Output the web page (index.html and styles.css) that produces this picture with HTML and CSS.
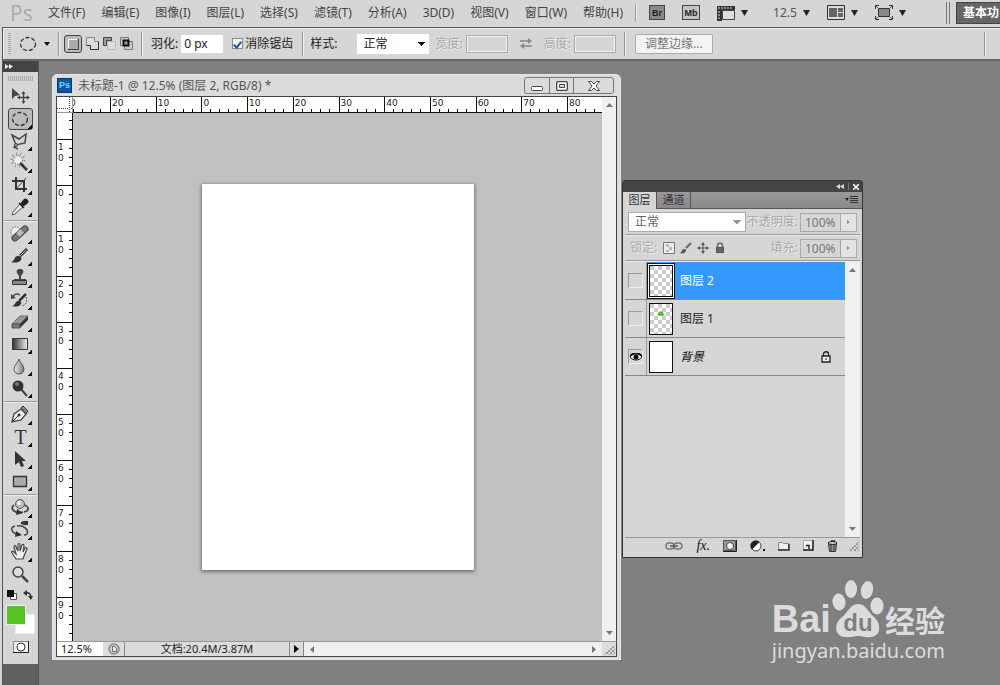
FILE: index.html
```html
<!DOCTYPE html>
<html lang="zh-CN">
<head>
    <meta charset="UTF-8">
    <meta name="viewport" content="width=device-width, initial-scale=1.0">
    <title>未标题-1</title>
    <link rel="stylesheet" href="styles.css">
</head>
<body>

    <!-- Menu bar -->
    <header class="menubar">
        <div class="logo">Ps</div>
        <nav class="menus">
            <button>文件(F)</button>
            <button>编辑(E)</button>
            <button>图像(I)</button>
            <button>图层(L)</button>
            <button>选择(S)</button>
            <button>滤镜(T)</button>
            <button>分析(A)</button>
            <button>3D(D)</button>
            <button>视图(V)</button>
            <button>窗口(W)</button>
            <button>帮助(H)</button>
        </nav>
        <span class="divider"></span>
        <div class="apps">
            <button class="app-btn bridge">Br</button>
            <button class="app-btn mini">Mb</button>
            <button class="icon-btn" aria-label="查看额外内容">
                <svg width="18" height="16" viewBox="0 0 18 16"><path d="M0 1h18v4H5v11H0z" fill="#333"/><path d="M2 2v2M5 2v2M8 2v2M11 2v2M14 2v2M1 7h2M1 10h2M1 13h2" stroke="#ddd"/><path d="M5.500 5.500h12v9h-12z" fill="#ddd" stroke="#444"/></svg>
                <svg width="7" height="6" viewBox="0 0 7 6"><path d="M0 0h7L3.500 6z" fill="#222"/></svg>
            </button>
            <button class="icon-btn zoom-level">12.5
                <svg width="7" height="6" viewBox="0 0 7 6"><path d="M0 0h7L3.500 6z" fill="#222"/></svg>
            </button>
            <button class="icon-btn" aria-label="排列文档">
                <svg width="18" height="15" viewBox="0 0 18 15"><path d="M.5.5h17v14H.5z" fill="#ddd" stroke="#333"/><path d="M2 3h8v9H2zM11 3h5v4h-5zM11 8h5v4h-5z" fill="#666"/></svg>
                <svg width="7" height="6" viewBox="0 0 7 6"><path d="M0 0h7L3.500 6z" fill="#222"/></svg>
            </button>
            <button class="icon-btn" aria-label="屏幕模式">
                <svg width="18" height="15" viewBox="0 0 18 15"><path d="M3.500 3.500h11v8h-11z" fill="#888" stroke="#333"/><path d="M.5 4V.5H4M14 .5h3.500V4M17.500 11v3.500H14M4 14.500H.5V11" fill="none" stroke="#333"/><path d="M1 1l3 3M17 1l-3 3M1 14l3-3M17 14l-3-3" stroke="#555"/></svg>
                <svg width="7" height="6" viewBox="0 0 7 6"><path d="M0 0h7L3.500 6z" fill="#222"/></svg>
            </button>
        </div>
        <div class="switcher">
            <button class="workspace-btn">基本功</button>
        </div>
    </header>

    <!-- Options bar -->
    <div class="options">
        <span class="grip"></span>
        <button class="icon-btn preset" aria-label="椭圆选框工具">
            <svg width="18" height="16" viewBox="0 0 18 16"><ellipse cx="9" cy="8" rx="7.500" ry="6.500" fill="none" stroke="#333" stroke-width="1.300" stroke-dasharray="4 2"/></svg>
            <svg width="6" height="4" viewBox="0 0 6 4"><path d="M0 0h6L3 4z" fill="#111"/></svg>
        </button>
        <span class="divider"></span>
        <div class="modes">
            <button class="mode active" aria-label="新选区"><svg width="12" height="12" viewBox="0 0 12 12"><path d="M2 2h9v9H2z" fill="#aaa"/><path d="M1.500 10V1.500H10" fill="none" stroke="#fff"/><path d="M11.500 1v10.500H1" fill="none" stroke="#444"/></svg></button>
            <button class="mode" aria-label="添加到选区"><svg width="13" height="13" viewBox="0 0 13 13"><path d="M.5.5h8v4h4v8h-8v-4h-4z" fill="#ddd" stroke="#888"/><path d="M.5 8.500h4v4h8v-8" fill="none" stroke="#333"/></svg></button>
            <button class="mode" aria-label="从选区减去"><svg width="13" height="13" viewBox="0 0 13 13"><path d="M4.500 4.500h8v8h-8z" fill="#ddd" stroke="#bbb"/><path d="M.5.5h8v3h-5v5h-3z" fill="#999" stroke="#444"/></svg></button>
            <button class="mode" aria-label="与选区交叉"><svg width="13" height="13" viewBox="0 0 13 13"><path d="M.5.5h8v8h-8zM4.500 4.500h8v8h-8z" fill="#ccc" stroke="#777"/><path d="M3.500 3.500h5v5h-5z" fill="#999" stroke="#111" stroke-width="2"/></svg></button>
        </div>
        <span class="divider"></span>
        <label class="field">羽化:<input class="text-box" type="text" value="0 px"></label>
        <label class="check"><input type="checkbox" checked>消除锯齿</label>
        <span class="divider"></span>
        <label class="field style-field">样式:
            <select class="style-select"><option>正常</option></select>
        </label>
        <label class="field muted">宽度:<input class="text-box" type="text" disabled></label>
        <svg class="swap" width="12" height="11" viewBox="0 0 12 11"><path d="M0 3h9M3 8h9" stroke="#888" stroke-width="1.500"/><path d="M8 0l4 3-4 3zM4 5L0 8l4 3z" fill="#888"/></svg>
        <label class="field muted">高度:<input class="text-box" type="text" disabled></label>
        <span class="divider"></span>
        <button class="refine">调整边缘...</button>
        <span class="divider last"></span>
    </div>

    <main class="workspace">

        <!-- Tool palette -->
        <aside class="tools">
            <div class="tools-head"><svg width="8" height="5" viewBox="0 0 8 5"><path d="M0 0l4 2.500L0 5zM4 0l4 2.500L4 5z" fill="#eee"/></svg></div>
            <span class="tools-grip"></span>
            <div class="tool-group">
                <button class="tool" aria-label="移动"><svg viewBox="0 0 22 22"><path d="M3 2v11l3-3 5-1z" fill="#444"/><path d="M14.500 7v9M10 11.500h9" stroke="#444" stroke-width="1.300"/><path d="M14.500 5l2 3h-4zM14.500 18l2-3h-4zM8 11.500l3-2v4zM21 11.500l-3-2v4z" fill="#444"/></svg></button>
                <button class="tool active more" aria-label="椭圆选框"><svg viewBox="0 0 22 22"><ellipse cx="11" cy="11" rx="7.500" ry="6.500" fill="none" stroke="#333" stroke-width="1.400" stroke-dasharray="4 2"/></svg></button>
                <button class="tool more" aria-label="多边形套索"><svg viewBox="0 0 22 22"><path d="M3 5l7 4 7-5-1 9-9 2zM7 15l-2 2 4 2" fill="none" stroke="#444" stroke-width="1.500"/><circle cx="7" cy="15" r="1.500" fill="#aaa" stroke="#444"/></svg></button>
                <button class="tool more" aria-label="魔棒"><svg viewBox="0 0 22 22"><circle cx="9" cy="8" r="4.500" fill="#eee" stroke="#777" stroke-dasharray="2 1"/><circle cx="9" cy="8" r="6.500" fill="none" stroke="#888" stroke-width="2" stroke-dasharray="1 3"/><path d="M11 11l7 7" stroke="#333" stroke-width="2.500"/></svg></button>
                <button class="tool more" aria-label="裁剪"><svg viewBox="0 0 22 22"><path d="M7 3v12h11M3 7h12v11" fill="none" stroke="#333" stroke-width="2"/><path d="M6 16L17 4" stroke="#444"/></svg></button>
                <button class="tool more" aria-label="吸管"><svg viewBox="0 0 22 22"><path d="M11 8l3 3-8 7-3 1 1-3z" fill="#eee" stroke="#555"/><path d="M10 7l5 5M12 8l3-4c1-1 2-1 3 0s1 2 0 3l-4 3z" fill="#222" stroke="#222" stroke-width="1.500"/></svg></button>
            </div>
            <div class="tool-group">
                <button class="tool more" aria-label="修复画笔"><svg viewBox="0 0 22 22"><circle cx="7" cy="9" r="5" fill="#eee" stroke="#555" stroke-dasharray="1 1"/><path d="M6 15L16 6" stroke="#444" stroke-width="7" stroke-linecap="round"/><path d="M6 15L16 6" stroke="#777" stroke-width="5" stroke-linecap="round"/><path d="M9 12l4-4" stroke="#bbb" stroke-width="5"/></svg></button>
                <button class="tool more" aria-label="画笔"><svg viewBox="0 0 22 22"><path d="M11 11l7-7" stroke="#333" stroke-width="3"/><path d="M11 11l6-6" stroke="#bbb"/><path d="M2 17c4-1 3-6 7-6 3 0 4 2 3 4-2 3-6 3-10 2z" fill="#333"/></svg></button>
                <button class="tool more" aria-label="仿制图章"><svg viewBox="0 0 22 22"><path d="M11 2c3 0 4 2 3 4l-2 3v3h5v2H5v-2h5V9L8 6c-1-2 0-4 3-4z" fill="#444"/><path d="M3.500 13.500h14v4h-14z" fill="#888" stroke="#333"/></svg></button>
                <button class="tool more" aria-label="历史记录画笔"><svg viewBox="0 0 22 22"><path d="M10 12l7-7" stroke="#333" stroke-width="2.500"/><path d="M3 17c4-1 3-5 6-5s4 1 3 3c-2 3-5 3-9 2z" fill="#333"/><path d="M4 8c1-3 4-4 7-2" fill="none" stroke="#444" stroke-width="1.500"/><path d="M2 5v5l5-1z" fill="#444"/><path d="M17 8c2 4 0 8-4 9" fill="none" stroke="#666" stroke-dasharray="2 1"/></svg></button>
                <button class="tool more" aria-label="橡皮擦"><svg viewBox="0 0 22 22"><path d="M3 13l8-8h8l-8 8z" fill="#999" stroke="#666"/><path d="M3 13h8v4H3z" fill="#777" stroke="#555"/><path d="M11 13l8-8v4l-8 8z" fill="#333"/></svg></button>
                <button class="tool more" aria-label="渐变"><svg viewBox="0 0 22 22"><defs><linearGradient id="grad"><stop stop-color="#333"/><stop offset="1" stop-color="#eee"/></linearGradient></defs><path d="M3.500 5.500h15v11h-15z" fill="url(#grad)" stroke="#333"/></svg></button>
                <button class="tool more" aria-label="模糊"><svg viewBox="0 0 22 22"><defs><linearGradient id="drop"><stop stop-color="#eee"/><stop offset="1" stop-color="#777"/></linearGradient></defs><path d="M10 4c1 4 5 6 5 10 0 3-2 5-5 5s-5-2-5-5c0-4 4-6 5-10z" fill="url(#drop)" stroke="#555"/></svg></button>
                <button class="tool more" aria-label="减淡"><svg viewBox="0 0 22 22"><path d="M12 12l6 7" stroke="#444" stroke-width="2"/><circle cx="9" cy="9" r="5.500" fill="#333"/><circle cx="8" cy="7" r="2" fill="#777"/></svg></button>
            </div>
            <div class="tool-group">
                <button class="tool more" aria-label="钢笔"><svg viewBox="0 0 22 22"><path d="M3 18l2-8 7-5 5 5-5 6z" fill="#eee" stroke="#444" stroke-width="1.300"/><path d="M12 4l2-2 5 5-2 3z" fill="#888" stroke="#333"/><path d="M3 18l6-6" stroke="#333"/><circle cx="10" cy="11" r="1.500" fill="#333"/></svg></button>
                <button class="tool more type-tool">T</button>
                <button class="tool more" aria-label="路径选择"><svg viewBox="0 0 22 22"><path d="M6 3v14l4-3 2 5 3-1-2-5h4z" fill="#333"/></svg></button>
                <button class="tool more" aria-label="矩形"><svg viewBox="0 0 22 22"><path d="M4.500 6.500h13v10h-13z" fill="#aaa" stroke="#333" stroke-width="1.300"/></svg></button>
            </div>
            <div class="tool-group">
                <button class="tool more" aria-label="3D 旋转"><svg viewBox="0 0 22 22"><path d="M5 8c-5 4 1 9 9 7M15 8c6 2 5 6 0 7" fill="none" stroke="#444" stroke-width="1.700"/><path d="M8 12l6 4-7 2z" fill="#333"/><circle cx="11" cy="7" r="4.500" fill="#bbb" stroke="#555"/><circle cx="10" cy="6" r="2" fill="#eee"/></svg></button>
                <button class="tool more" aria-label="3D 环绕"><svg viewBox="0 0 22 22"><path d="M6 7c-7 2-2 8 5 9M8 7c7-1 12 4 10 8-1 1-2 1-3 1" fill="none" stroke="#444" stroke-width="1.500"/><path d="M7 12l6 4-7 2z" fill="#333"/><path d="M15 2h4v4h-4l-3-1V3z" fill="#333"/></svg></button>
                <button class="tool more" aria-label="抓手"><svg viewBox="0 0 22 22"><path d="M7 18l-4-6c-1-2 1-2 2-1l2 2-2-7c0-2 2-2 2 0l2 4V4c0-2 2-2 2 0v6l2-6c1-1 2-1 2 1l-1 6 2-4c1-1 2 0 2 1l-3 7-1 3z" fill="#eee" stroke="#444" stroke-width="1.200"/></svg></button>
                <button class="tool" aria-label="缩放"><svg viewBox="0 0 22 22"><path d="M13 13l6 6" stroke="#444" stroke-width="2.500"/><circle cx="9" cy="9" r="5" fill="#ddd" stroke="#444" stroke-width="1.500"/></svg></button>
            </div>
            <div class="color-reset">
                <svg width="10" height="10" viewBox="0 0 10 10"><path d="M3.500 3.500h6v6h-6z" fill="#fff" stroke="#555"/><path d="M0 0h7v7H0z" fill="#111"/></svg>
                <svg width="10" height="10" viewBox="0 0 10 10"><path d="M2 3c4-1 6 1 6 5" fill="none" stroke="#333" stroke-width="1.500"/><path d="M0 3l4-3v6zM8 10L5 6h5z" fill="#333"/></svg>
            </div>
            <div class="swatches">
                <span class="swatch back"></span>
                <span class="swatch front"></span>
            </div>
            <button class="mask-btn" aria-label="快速蒙版"><svg width="16" height="12" viewBox="0 0 16 12"><path d="M1 1h14v11H1z" fill="#eee"/><path d="M15.500 0v11.500H0" fill="none" stroke="#222"/><path d="M.5 11V.5H15" fill="none" stroke="#888"/><circle cx="8" cy="6" r="4" fill="#fff" stroke="#333"/></svg></button>
        </aside>

        <!-- Document window -->
        <section class="doc-window">
            <div class="titlebar">
                <span class="ps-icon">Ps</span>
                <span class="doc-title">未标题-1 @ 12.5% (图层 2, RGB/8) *</span>
                <div class="window-btns">
                    <button aria-label="最小化"><svg width="12" height="10" viewBox="0 0 12 10"><rect x=".5" y="5.500" width="11" height="4" rx="1" fill="#fff" stroke="#444"/></svg></button>
                    <button aria-label="最大化"><svg width="12" height="10" viewBox="0 0 12 10"><rect x=".7" y=".7" width="10.600" height="8.600" rx="1" fill="#fff" stroke="#444" stroke-width="1.300"/><path d="M3.500 3.500h5v3h-5z" fill="#ddd" stroke="#444"/></svg></button>
                    <button class="close" aria-label="关闭"><svg width="12" height="10" viewBox="0 0 12 10"><path d="M.5.5h3L6 3 8.500.5h3L8 5l3.500 4.500h-3L6 7 3.500 9.500h-3L4 5z" fill="#fff" stroke="#444"/></svg></button>
                </div>
            </div>
            <div class="doc-body">
                <div class="ruler-corner"></div>
                <div class="ruler-x">
                    <span class="first">0</span><span>20</span><span>10</span><span>0</span><span>10</span><span>20</span><span>30</span><span>40</span><span>50</span><span>60</span><span>70</span><span class="last">80</span>
                </div>
                <div class="ruler-y">
                    <span class="first"></span><span>1<br>0</span><span>0</span><span>1<br>0</span><span>2<br>0</span><span>3<br>0</span><span>4<br>0</span><span>5<br>0</span><span>6<br>0</span><span>7<br>0</span><span>8<br>0</span><span class="last">9<br>0</span>
                </div>
                <div class="canvas"><div class="page"></div></div>
                <div class="scroll-y">
                    <svg width="7" height="4" viewBox="0 0 7 4"><path d="M0 4l3.500-4L7 4z" fill="#777"/></svg>
                    <svg width="7" height="4" viewBox="0 0 7 4"><path d="M0 0h7L3.500 4z" fill="#777"/></svg>
                </div>
            </div>
            <div class="statusbar">
                <input class="zoom-box" type="text" value="12.5%" aria-label="缩放比例">
                <span class="version"><svg width="12" height="12" viewBox="0 0 12 12"><circle cx="6" cy="6" r="5" fill="#ccc" stroke="#888" stroke-width="1.500"/><path d="M4.500 3.500v5h4v-3l-2-2z" fill="#eee" stroke="#666"/></svg></span>
                <span class="doc-size">文档:20.4M/3.87M</span>
                <button class="status-menu" aria-label="状态菜单"><svg width="5" height="8" viewBox="0 0 5 8"><path d="M0 0l5 4-5 4z" fill="#000"/></svg></button>
                <div class="scroll-x">
                    <svg width="4" height="7" viewBox="0 0 4 7"><path d="M4 0v7L0 3.500z" fill="#777"/></svg>
                    <svg width="4" height="7" viewBox="0 0 4 7"><path d="M0 0v7l4-3.500z" fill="#777"/></svg>
                </div>
                <span class="resize"></span>
            </div>
        </section>

        <!-- Layers panel -->
        <section class="panel">
            <div class="panel-head">
                <svg width="8" height="5" viewBox="0 0 8 5"><path d="M4 0v5L0 2.500zM8 0v5L4 2.500z" fill="#ddd"/></svg>
                <span class="head-line"></span>
                <svg width="6" height="6" viewBox="0 0 6 6"><path d="M0 0l6 6M6 0L0 6" stroke="#eee" stroke-width="1.600"/></svg>
            </div>
            <div class="tabs">
                <button class="tab active">图层</button>
                <button class="tab">通道</button>
                <svg class="panel-menu" width="13" height="8" viewBox="0 0 13 8"><path d="M0 2h4L2 5z" fill="#222"/><path d="M5 .5h8M5 2.500h8M5 4.500h8M5 6.500h8" stroke="#333"/></svg>
            </div>
            <div class="panel-row">
                <select class="blend" aria-label="混合模式"><option>正常</option></select>
                <label class="percent">不透明度:<input type="text" value="100%"></label>
                <button class="step" aria-label="不透明度滑块"><svg width="3" height="4" viewBox="0 0 3 4"><path d="M0 0l3 2-3 2z" fill="#888"/></svg></button>
            </div>
            <div class="panel-row">
                <span class="lock-label">锁定:</span>
                <div class="locks">
                    <svg width="12" height="12" viewBox="0 0 12 12"><path d="M.5.5h11v11H.5z" fill="#eee" stroke="#777"/><path d="M3 2h3v3H3zM6 5h3v3H6zM3 8h3v2H3z" fill="#bbb"/></svg>
                    <svg width="12" height="12" viewBox="0 0 12 12"><path d="M6 6l5-5" stroke="#666" stroke-width="2"/><path d="M0 11c2-1 2-4 4-4s3 1 2 2c-1 2-3 3-6 2z" fill="#555"/></svg>
                    <svg width="12" height="12" viewBox="0 0 12 12"><path d="M6 1v10M1 6h10" stroke="#555"/><path d="M6 0l2 3H4zM6 12l2-3H4zM0 6l3-2v4zM12 6L9 4v4z" fill="#555"/></svg>
                    <svg width="12" height="12" viewBox="0 0 12 12"><path d="M3.500 6V4c0-4 5-4 5 0v2" fill="none" stroke="#666" stroke-width="1.500"/><path d="M2.500 5.500h7v5h-7z" fill="#666" stroke="#555"/></svg>
                </div>
                <label class="percent">填充:<input type="text" value="100%"></label>
                <button class="step" aria-label="填充滑块"><svg width="3" height="4" viewBox="0 0 3 4"><path d="M0 0l3 2-3 2z" fill="#888"/></svg></button>
            </div>
            <div class="layer-area">
                <ul class="layers">
                    <li class="layer selected">
                        <span class="eye-cell"><span class="eye"></span></span>
                        <span class="thumb checker"></span>
                        <span class="layer-name">图层 2</span>
                    </li>
                    <li class="layer">
                        <span class="eye-cell"><span class="eye"></span></span>
                        <span class="thumb checker"><svg width="8" height="5" viewBox="0 0 8 5"><path d="M0 4c1-2 2-1 2-3 2-2 4 0 4 1l2 2-3 1z" fill="#4fbf26"/></svg></span>
                        <span class="layer-name">图层 1</span>
                    </li>
                    <li class="layer">
                        <span class="eye-cell"><span class="eye"><svg width="12" height="8" viewBox="0 0 12 8"><path d="M0 4c3-4 9-4 12 0-3 4-9 4-12 0z" fill="#eee" stroke="#111"/><path d="M0 3c3-4 9-4 12 0" fill="none" stroke="#111" stroke-width="1.500"/><circle cx="6" cy="4" r="2.500" fill="#111"/></svg></span></span>
                        <span class="thumb"></span>
                        <span class="layer-name italic">背景</span>
                        <svg class="lock" width="10" height="12" viewBox="0 0 10 12"><path d="M2.500 5V3c0-3 5-3 5 0v2" fill="none" stroke="#222" stroke-width="1.300"/><path d="M1 5h8v6H1z" fill="#eee" stroke="#222" stroke-width="1.300"/><path d="M5 7v2" stroke="#222"/></svg>
                    </li>
                </ul>
                <div class="scroll-y">
                    <svg width="7" height="4" viewBox="0 0 7 4"><path d="M0 4l3.500-4L7 4z" fill="#777"/></svg>
                    <svg width="7" height="4" viewBox="0 0 7 4"><path d="M0 0h7L3.500 4z" fill="#777"/></svg>
                </div>
            </div>
            <div class="panel-foot">
                <button aria-label="链接图层"><svg width="18" height="8" viewBox="0 0 18 8"><rect x="1" y="1" width="8" height="6" rx="3" fill="none" stroke="#777" stroke-width="1.500"/><rect x="9" y="1" width="8" height="6" rx="3" fill="none" stroke="#777" stroke-width="1.500"/><path d="M5 4h8" stroke="#555" stroke-width="1.500"/></svg></button>
                <button class="fx">fx.</button>
                <button aria-label="添加蒙版"><svg width="14" height="12" viewBox="0 0 14 12"><path d="M.5.500h12v10H.5z" fill="#999" stroke="#555"/><path d="M13.500 0v11.500H0" fill="none" stroke="#222"/><circle cx="7" cy="6" r="3.500" fill="#fff" stroke="#444"/></svg></button>
                <button aria-label="调整图层"><svg width="15" height="12" viewBox="0 0 15 12"><circle cx="6" cy="6" r="5" fill="#fff" stroke="#444"/><path d="M2 9.500A5 5 0 0 1 9.500 2z" fill="#222"/><path d="M13 9h2v2h-2z" fill="#111"/></svg></button>
                <button aria-label="新建组"><svg width="12" height="10" viewBox="0 0 12 10"><path d="M.5 8.500v-7h4l1 1h5v6z" fill="#eee" stroke="#888"/><path d="M0 9h11V3" fill="none" stroke="#333" stroke-width="1.500"/></svg></button>
                <button aria-label="新建图层"><svg width="11" height="11" viewBox="0 0 11 11"><path d="M.5.500h9v9h-9z" fill="#eee" stroke="#aaa"/><path d="M0 10h10V0" fill="none" stroke="#222" stroke-width="1.500"/><path d="M3 5.500h3V9" fill="none" stroke="#222" stroke-width="1.500"/></svg></button>
                <button aria-label="删除图层"><svg width="11" height="12" viewBox="0 0 11 12"><path d="M1.500 4.500h8l-1 7h-6z" fill="#999" stroke="#333"/><path d="M4 5v6M7 5v6" stroke="#333"/><ellipse cx="5.500" cy="3" rx="4.500" ry="1.500" fill="#ccc" stroke="#222"/><path d="M4 1h4" stroke="#222" stroke-width="1.500"/></svg></button>
                <span class="resize"></span>
            </div>
        </section>

        <!-- Watermark -->
        <div class="watermark">
            <div class="brand">
                <span class="bai">Bai</span>
                <svg width="54" height="58" viewBox="0 0 54 58">
                    <g fill="#dcdcdc"><ellipse cx="8" cy="22" rx="6.500" ry="8.500" transform="rotate(-8 8 22)"/><ellipse cx="20" cy="9" rx="6" ry="9"/><ellipse cx="36" cy="10" rx="6" ry="9" transform="rotate(12 36 10)"/><ellipse cx="46" cy="26" rx="6.500" ry="8.500"/><path d="M27 24c8 0 10 8 16 13 7 6 8 19-3 20-5 1-8-1-13-1s-8 2-13 1C3 56 3 44 10 38c7-5 9-14 17-14z"/></g>
                    <text class="du" x="27" y="51" text-anchor="middle">du</text>
                </svg>
                <span class="jingyan">经验</span>
            </div>
            <div class="site">jingyan.baidu.com</div>
        </div>
    </main>

</body>
</html>
```

FILE: styles.css
```css
* {
    box-sizing: border-box;
}

body {
    margin: 0;
    height: 100vh;
    display: flex;
    flex-direction: column;
    overflow: hidden;
    background-color: #d6d6d6;
    color: #222;
    font-family: "Noto Sans", "Noto Sans CJK SC", sans-serif;
    font-size: 12px;
    line-height: 16px;
}

button,
input,
select {
    font: inherit;
    color: inherit;
    margin: 0;
    padding: 0;
    border: none;
    border-radius: 0;
    background: none;
    white-space: nowrap;
}

svg {
    display: block;
    flex: none;
}

.divider {
    flex: none;
    width: 2px;
    height: 24px;
    border-left: 1px solid #999;
    border-right: 1px solid #eee;
}

/* Menu bar */
.menubar {
    display: flex;
    align-items: center;
    flex: none;
    height: 27px;
    padding-left: 10px;
    padding-bottom: 2px;
}

.menubar .divider {
    height: 18px;
    margin: 0 12px;
}

.logo {
    width: 38px;
    flex: none;
    color: #aaa;
    font-family: "Open Sans", sans-serif;
    font-size: 21px;
    line-height: 24px;
}

.menus {
    display: flex;
    gap: 16px;
    color: #444;
}

.apps {
    display: flex;
    align-items: center;
    gap: 17px;
}

.app-btn {
    width: 16px;
    height: 15px;
    border: 1px solid #444;
    font-family: "Liberation Sans", sans-serif;
    font-size: 9px;
    line-height: 12px;
    font-weight: bold;
    text-align: center;
}

.bridge {
    background-color: #888;
}

.mini {
    width: 18px;
    background-color: #c4c4c4;
}

.icon-btn {
    display: flex;
    align-items: center;
    gap: 6px;
    flex: none;
}

.zoom-level {
    margin-left: 8px;
    color: #555;
}

.switcher {
    flex: none;
    display: flex;
    margin-left: auto;
    width: 54px;
    padding-left: 9px;
    border-left: 1px solid #777;
    box-shadow: inset 2px 0 #d6d6d6, inset 3px 0 #777;
    overflow: hidden;
}

.workspace-btn {
    flex: none;
    width: 60px;
    height: 22px;
    padding-left: 6px;
    background-color: #666;
    border: 1px solid #444;
    color: #fff;
    font-weight: bold;
    text-align: left;
}

/* Options bar */
.options {
    display: flex;
    align-items: center;
    flex: none;
    height: 34px;
    margin-left: 2px;
    padding-left: 5px;
    border: 1px solid #555;
    border-right: none;
    border-bottom: 2px solid #666;
    box-shadow: inset 1px 1px #eee;
}

.grip {
    width: 3px;
    height: 22px;
    background: repeating-linear-gradient(#aaa 0 1px, transparent 1px 2px);
}

.preset {
    gap: 7px;
    margin: 0 8px;
}

.modes {
    display: flex;
    align-items: center;
    gap: 4px;
    margin: 0 8px 0 4px;
}

.mode.active {
    display: flex;
    align-items: center;
    justify-content: center;
    width: 18px;
    height: 18px;
    background-color: #bbb;
    border: 1px solid #444;
    border-radius: 3px;
}

.field {
    display: flex;
    align-items: center;
    gap: 3px;
    flex: none;
    margin-left: 8px;
}

.text-box {
    width: 42px;
    height: 18px;
    padding: 0 3px;
    background-color: #fff;
}

.check {
    display: flex;
    align-items: center;
    gap: 2px;
    flex: none;
    margin: 0 9px;
}

.check input {
    appearance: none;
    width: 11px;
    height: 11px;
    border: 1px solid #889;
    background: #f4f4f4;
    display: grid;
    place-items: center;
}

.check input:checked::before {
    content: "";
    width: 3px;
    height: 6px;
    border: solid #2c4a9a;
    border-width: 0 2px 2px 0;
    transform: rotate(40deg);
}

.style-field {
    gap: 20px;
    margin-left: 6px;
}

/* drop-down arrows are drawn with a conic gradient */
.style-select,
.blend {
    appearance: none;
    height: 20px;
    padding-left: 6px;
    background: conic-gradient(from 315deg at 50% 100%, #111 90deg, #fff 0) no-repeat right 4px center / 8px 4px, #fff;
    background: conic-gradient(from 315deg at 50% 100%, #111 90deg, #fff 0) no-repeat right 4px center / 8px 4px #fff;
}

.style-select {
    width: 72px;
}

.muted {
    margin-left: 6px;
    color: #aaa;
    text-shadow: 1px 1px #eee;
}

.muted .text-box {
    background-color: #d6d6d6;
    border: 1px solid #aaa;
    outline: 1px solid #eee;
    outline-offset: -2px;
}

.swap {
    margin: 0 6px 0 12px;
}

.options .muted + .divider {
    margin-left: 8px;
}

.refine {
    flex: none;
    width: 78px;
    height: 20px;
    margin-left: 9px;
    background-color: #f4f4f4;
    border: 1px solid #aaa;
    border-radius: 2px;
    color: #777;
}

.last.divider {
    margin-left: auto;
    margin-right: 14px;
}

/* Workspace */
.workspace {
    position: relative;
    flex: 1;
    display: flex;
    min-height: 0;
    background-color: #808080;
    border-left: 2px solid #d6d6d6;
}

/* Tool palette */
.tools {
    width: 37px;
    padding: 0 1px;
    display: flex;
    flex-direction: column;
    border: solid #555;
    border-width: 0 1px;
    background: linear-gradient(#d6d6d6, #d6d6d6) no-repeat 0 0 / 100% 603px, #606060;
}

.tools-head {
    margin: 0 -1px;
    height: 11px;
    padding: 3px 2px;
    background-color: #444;
}

.tools-grip {
    height: 5px;
    margin: 4px 4px 5px;
    background: repeating-linear-gradient(90deg, #aaa 0 1px, transparent 1px 2px);
}

.tool-group {
    display: flex;
    flex-direction: column;
    align-items: center;
}

.tool-group + .tool-group {
    margin-top: 2px;
    padding-top: 2px;
    border-top: 1px solid #999;
    box-shadow: inset 0 1px #eee;
}

.tool {
    position: relative;
    width: 25px;
    height: 22px;
    border: 1px solid transparent;
}

.tool svg {
    width: 22px;
    height: 22px;
    margin-top: -1px;
}

.tool.active {
    background-color: #bbb;
    border-color: #444;
    border-radius: 3px;
}

.tool.more::after {
    content: "";
    position: absolute;
    right: 0;
    bottom: 0;
    width: 4px;
    height: 4px;
    background: linear-gradient(135deg, transparent 50%, #111 50%);
}

.type-tool {
    font-family: "Liberation Serif", serif;
    font-size: 20px;
    line-height: 20px;
    color: #333;
}

.color-reset {
    display: flex;
    gap: 6px;
    padding: 5px 3px;
}

.swatches {
    display: grid;
    grid-template-columns: 9px 11px 9px;
    grid-template-rows: 9px 11px 9px;
    padding-left: 2px;
}

.swatch {
    border: 1px solid #eee;
}

.swatch.back {
    grid-area: 2 / 2 / 4 / 4;
    background-color: #fff;
}

.swatch.front {
    grid-area: 1 / 1 / 3 / 3;
    background-color: #55c420;
}

.mask-btn {
    align-self: center;
    margin-top: 7px;
}

/* Document window */
.doc-window {
    position: absolute;
    left: 50px;
    top: 13px;
    width: 569px;
    height: 586px;
    display: flex;
    flex-direction: column;
    padding: 0 3px 2px;
    background-color: #dcdcdc;
    border: 1px solid #e6e6e6;
    border-radius: 5px 5px 0 0;
}

.titlebar {
    display: flex;
    align-items: center;
    height: 21px;
    gap: 6px;
}

.ps-icon {
    width: 15px;
    height: 15px;
    margin-left: 1px;
    background-color: #0a5aa5;
    border: 1px solid #063a70;
    color: #7fd0ff;
    font-family: "Liberation Sans", sans-serif;
    font-size: 9px;
    font-weight: bold;
    line-height: 12px;
    text-align: center;
}

.doc-title {
    flex: 1;
    color: #555;
}

.window-btns {
    display: flex;
    margin-right: 3px;
    border: 1px solid #777;
    border-radius: 3px;
}

.window-btns button {
    display: grid;
    place-items: center;
    width: 24px;
    height: 15px;
}

.window-btns button + button {
    border-left: 1px solid #777;
}

.window-btns .close {
    width: 40px;
}

.doc-body {
    flex: 1;
    display: grid;
    grid-template-columns: 16px 1fr 14px;
    grid-template-rows: 16px 1fr;
    min-height: 0;
    border: 1px solid #444;
    border-bottom: none;
}

/* dotted cross of the ruler origin */
.ruler-corner {
    background: repeating-linear-gradient(#444 0 1px, #fff 1px 2px) no-repeat 12px 0 / 1px 100%, repeating-linear-gradient(90deg, #444 0 1px, #fff 1px 2px) no-repeat 0 11px / 100% 1px, #fff;
    border-right: 1px solid #999;
    border-bottom: 1px solid #999;
}

.ruler-x,
.ruler-y {
    display: flex;
    overflow: hidden;
    background-color: #fff;
    font-family: "DejaVu Sans", sans-serif;
    font-size: 9px;
    line-height: 11px;
}

.ruler-x {
    border-bottom: 1px solid #111;
}

.ruler-x span {
    flex: 1;
    min-width: 0;
    padding: 1px;
    border-left: 1px solid #111;
    background: linear-gradient(90deg, transparent 8px, #111 8px 9px, transparent 9px 17px, #111 17px 18px, transparent 18px 26px, #111 26px 27px, transparent 27px 35px, #111 35px 36px, transparent 36px) no-repeat 0 100% / 45px 3px;
}

.ruler-x .first {
    flex: 0 0 37px;
    padding-left: 0;
    border-left: none;
    text-indent: -3px;
    background-position: 100% 100%;
}

.ruler-x .last {
    flex: 0 0 35px;
}

.ruler-y {
    flex-direction: column;
    border-right: 1px solid #111;
}

.ruler-y span {
    flex: 1;
    min-height: 0;
    padding: 2px 1px;
    border-top: 1px solid #111;
    background: linear-gradient(transparent 8px, #111 8px 9px, transparent 9px 17px, #111 17px 18px, transparent 18px 26px, #111 26px 27px, transparent 27px 35px, #111 35px 36px, transparent 36px) no-repeat 100% 0 / 3px 45px;
}

.ruler-y .first {
    flex: 0 0 26px;
    border-top: none;
    background-position: 100% 100%;
}

.ruler-y .last {
    flex: 0 0 44px;
}

.canvas {
    display: grid;
    place-items: center;
    background-color: #c0c0c0;
}

.page {
    width: 272px;
    height: 386px;
    background-color: #fff;
    box-shadow: 0 1px 3px 1px #777;
}

.scroll-y {
    display: flex;
    flex-direction: column;
    justify-content: space-between;
    align-items: center;
    padding: 6px 0;
    background-color: #f0f0f0;
}

.doc-body .scroll-y {
    grid-area: 1 / 3 / 3 / 4;
}

.statusbar {
    display: flex;
    height: 16px;
    border: 1px solid #444;
    border-top: 1px solid #999;
    line-height: 14px;
}

.zoom-box {
    width: 46px;
    padding-left: 4px;
    background-color: #fff;
    font-size: 11px;
}

.version {
    display: grid;
    place-items: center;
    width: 22px;
    border-right: 1px solid #888;
}

.doc-size {
    width: 165px;
    text-align: center;
    border-right: 1px solid #888;
    font-size: 11px;
}

.status-menu {
    display: grid;
    place-items: center;
    width: 14px;
    border-right: 1px solid #888;
}

.scroll-x {
    flex: 1;
    display: flex;
    justify-content: space-between;
    align-items: center;
    padding: 0 6px;
    background-color: #f0f0f0;
}

.resize {
    width: 14px;
    background: repeating-conic-gradient(#999 0 25%, transparent 0 50%) 0 0 / 4px 4px;
    clip-path: polygon(90% 20%, 90% 90%, 10% 90%);
}

/* Layers panel */
.panel {
    position: absolute;
    left: 620px;
    top: 119px;
    width: 241px;
    height: 378px;
    display: flex;
    flex-direction: column;
    background-color: #d6d6d6;
    border: 1px solid #333;
    border-radius: 3px 3px 0 0;
}

.panel-head {
    display: flex;
    justify-content: flex-end;
    align-items: center;
    gap: 4px;
    height: 11px;
    padding-right: 3px;
    background-color: #444;
}

.head-line {
    width: 1px;
    height: 7px;
    background-color: #777;
}

.tabs {
    display: flex;
    align-items: center;
    height: 17px;
    background: linear-gradient(#999, #888);
    border-bottom: 1px solid #555;
}

.tab {
    width: 34px;
    height: 17px;
    border-right: 1px solid #555;
    font-size: 11px;
    color: #333;
}

.tab.active {
    background-color: #d6d6d6;
}

.panel-menu {
    margin-left: auto;
    margin-right: 4px;
}

.panel-row {
    display: flex;
    align-items: center;
    height: 26px;
    margin: 0 2px;
    padding: 1px 3px 0;
    border-bottom: 1px solid #999;
    box-shadow: 0 1px #eee;
}

.blend {
    flex: none;
    width: 118px;
    border: 1px solid #aaa;
    color: #666;
    background-image: conic-gradient(from 315deg at 50% 100%, #999 90deg, #fff 0);
}

.percent {
    display: flex;
    align-items: center;
    gap: 2px;
    margin-left: auto;
    color: #aaa;
    text-shadow: 1px 1px #eee;
    white-space: nowrap;
}

.percent input {
    width: 41px;
    height: 19px;
    padding-left: 4px;
    border: 1px solid #aaa;
    color: #777;
}

.step {
    display: grid;
    place-items: center;
    flex: none;
    width: 16px;
    height: 19px;
    background-color: #e4e4e4;
    border: 1px solid #aaa;
    border-left: none;
}

.lock-label {
    color: #aaa;
    margin-left: 2px;
    text-shadow: 1px 1px #eee;
}

.locks {
    display: flex;
    gap: 5px;
    margin-left: 6px;
}

.layer-area {
    flex: 1;
    display: flex;
    margin: 0 2px;
    padding-top: 1px;
    border-bottom: 1px solid #999;
}

.layers {
    flex: 1;
    margin: 0;
    padding: 0;
    list-style: none;
}

.layer {
    display: flex;
    align-items: center;
    height: 38px;
    border-bottom: 1px solid #888;
}

.layer.selected {
    background-color: #3399ff;
    color: #fff;
}

.eye-cell {
    display: grid;
    place-items: center;
    align-self: stretch;
    width: 22px;
    background-color: #d6d6d6;
    border-right: 1px solid #999;
}

.eye {
    display: grid;
    place-items: center;
    width: 15px;
    height: 15px;
    border: 1px solid #eee;
    border-top-color: #999;
    border-left-color: #999;
}

.thumb {
    display: flex;
    justify-content: center;
    width: 24px;
    height: 32px;
    margin: 0 7px 0 2px;
    padding-top: 7px;
    background-color: #fff;
    border: 1px solid #111;
}

.checker {
    background: repeating-conic-gradient(#fff 0 25%, #ccc 0 50%) 0 0 / 8px 8px;
}

.selected .thumb {
    outline: 1px solid #111;
    outline-offset: 1px;
    box-shadow: 0 0 0 1px #fff;
}

.italic {
    font-style: italic;
    color: #111;
}

.lock {
    margin-left: auto;
    margin-right: 14px;
}

.layer-area .scroll-y {
    width: 15px;
}

.panel-foot {
    display: flex;
    align-items: center;
    justify-content: flex-end;
    gap: 13px;
    height: 19px;
    padding: 0 2px 4px 0;
}

.fx {
    font-family: "Liberation Serif", serif;
    font-size: 14px;
    font-style: italic;
    color: #111;
}

.panel-foot .resize {
    height: 14px;
    margin-left: -5px;
}

/* Watermark */
.watermark {
    position: absolute;
    right: 55px;
    bottom: 21px;
    color: #dcdcdc;
}

.brand {
    display: flex;
    align-items: flex-end;
    height: 58px;
}

.bai {
    font-family: "Liberation Sans", sans-serif;
    font-weight: bold;
    font-size: 38px;
    line-height: 38px;
}

.du {
    font-family: "Liberation Sans", sans-serif;
    font-weight: bold;
    font-size: 24px;
    fill: #808080;
}

.jingyan {
    font-family: "Noto Sans CJK SC", sans-serif;
    font-weight: bold;
    font-size: 30px;
    line-height: 38px;
}

.site {
    font-size: 20px;
    line-height: 26px;
}
```
